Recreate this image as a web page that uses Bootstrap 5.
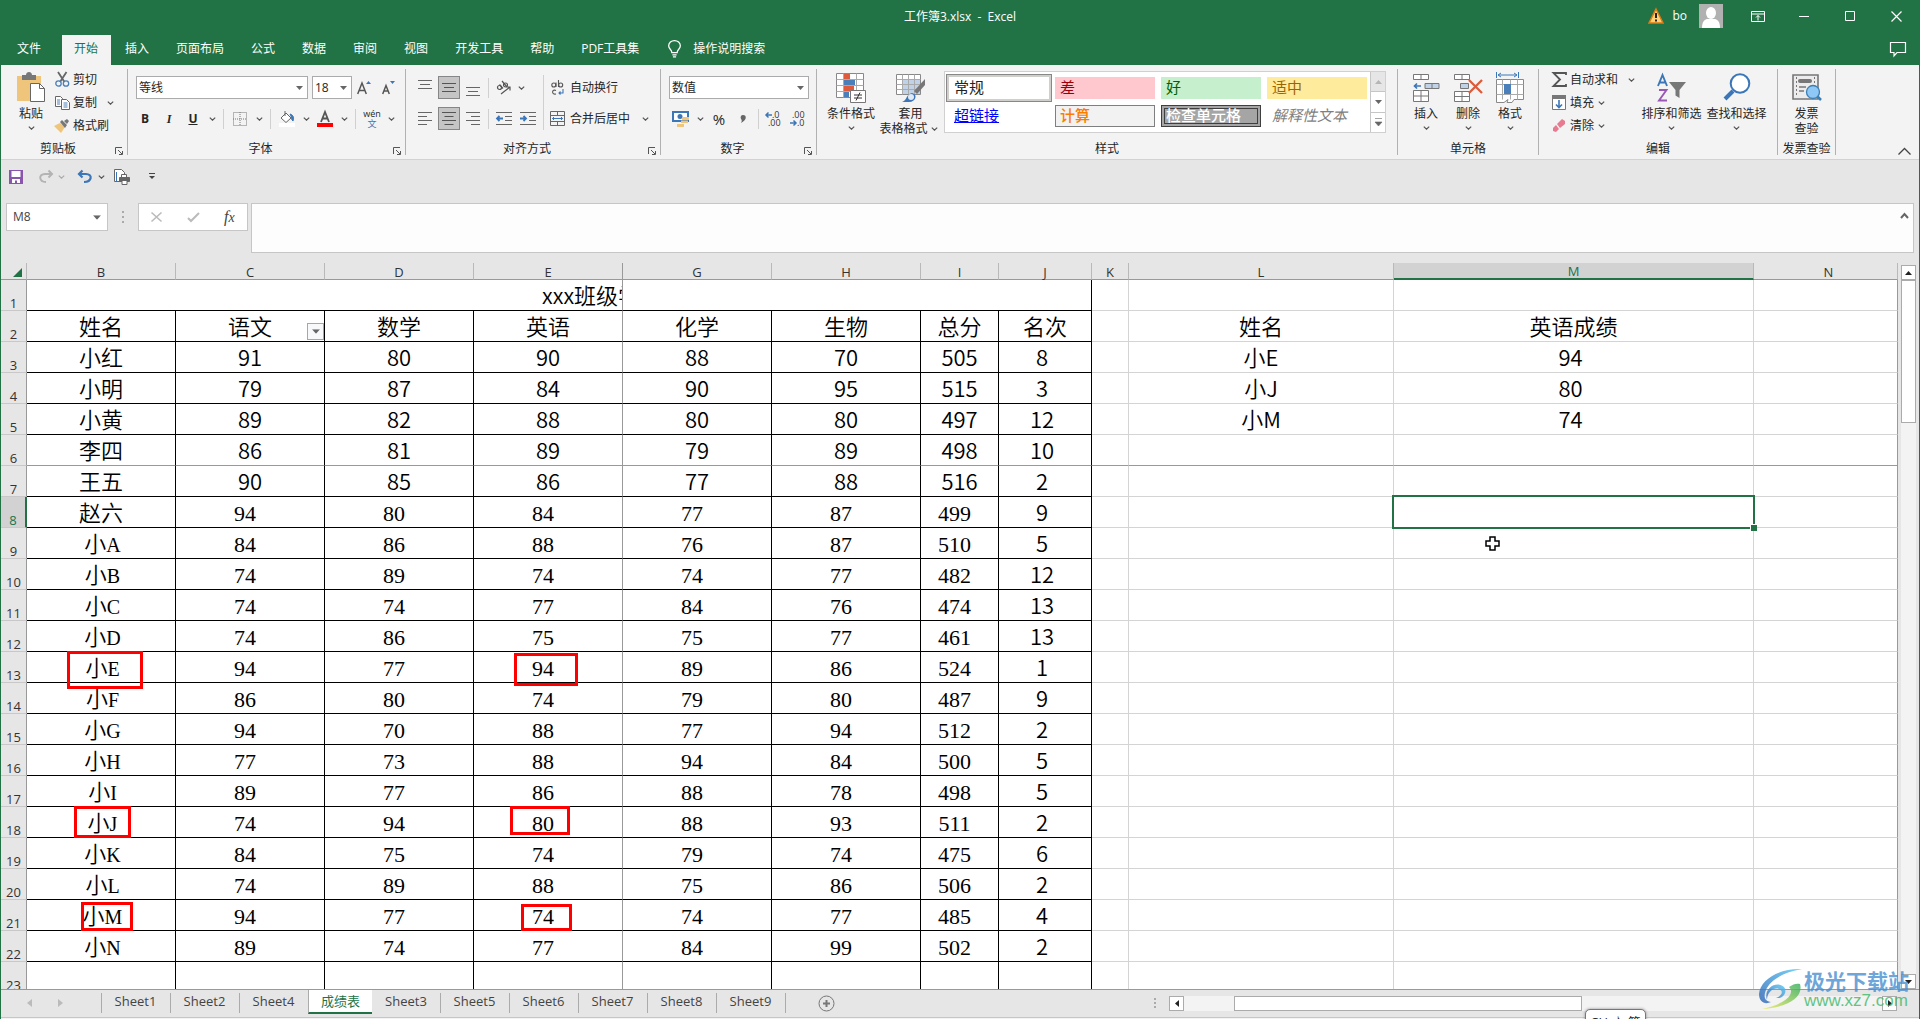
<!DOCTYPE html>
<html lang="zh-CN">
<head>
<meta charset="utf-8">
<meta name="viewport" content="width=device-width, initial-scale=1">
<title>工作簿3.xlsx - Excel</title>
<link href="https://cdn.jsdelivr.net/npm/bootstrap@5.3.0/dist/css/bootstrap.min.css" rel="stylesheet">
<script src="https://cdn.jsdelivr.net/npm/bootstrap@5.3.0/dist/js/bootstrap.bundle.min.js"></script>
<style>
:root{--xl:#217346;--ui:#f3f3f3;--chrome:#e6e6e6}
body{font:12px/16px "Open Sans","Noto Sans CJK SC",sans-serif;color:#262626;background:var(--chrome);overflow:hidden}
button,input,select{font:inherit;color:inherit;background:none;border:0;padding:0;margin:0;border-radius:0}
svg{display:block;flex:none;overflow:visible}
.app{border:solid var(--xl);border-width:0 1px;position:relative}
.titlebar{background:var(--xl);color:#fff;height:35px;display:grid;grid-template-columns:1fr auto 1fr}
.titlebar .doc{line-height:34px;white-space:pre}
.titlebar .tools{height:32px}
.winbtn{width:46px;height:32px;display:flex;align-items:center;justify-content:center}
.tabstrip{background:var(--xl);height:30px;color:#fff}
.tabstrip button{padding:0 13px 2px 14px;height:30px;white-space:nowrap}
.tabstrip .file-tab{padding:0 21px 2px 16px}
.tabstrip .on{background:var(--ui);color:var(--xl);padding:0 13px 2px 12px}
.ribbon{background:var(--ui);height:95px;padding-top:4px;border-bottom:1px solid #d2d2d2}
.grp{height:88px;display:flex;flex-direction:column;flex:none}
.grp-main{height:72px;display:flex;align-items:flex-start}
.grp-name{display:flex;height:16px;line-height:16px;text-align:center}
.rule{width:1px;height:86px;background:#b1b1b1;flex:none}
.g-clip{width:126px}.g-font{width:277px}.g-align{width:254px}.g-num{width:155px}.g-style{width:580px}.g-cells{width:140px}.g-edit{width:238px}.g-inv{width:57px}
.launch{width:12px;height:14px;padding-top:5px}
.line3{height:23px;display:flex;align-items:center;gap:2px;white-space:nowrap;padding-bottom:2px}
.ico{width:18px;display:flex;justify-content:center;flex:none}
.big{display:flex;flex-direction:column;align-items:center;padding-top:3px;line-height:15px;white-space:nowrap}
.big .pic{height:31px;margin-bottom:3px;display:flex;align-items:center;justify-content:center}
.big .drop{height:13px;display:flex;align-items:center}
.two{display:flex;flex-direction:column;gap:8px;padding-top:7px}
.trow{height:23px;display:flex;align-items:center}
.sq{width:24px;height:23px;display:flex;align-items:center;justify-content:center}
.sq.pressed{width:22px;margin:0 1px;background:#c5c5c5;border:1px solid #868686}
.dd{width:14px;height:23px;display:flex;align-items:center;justify-content:center}
.dd.slim{width:10px}
.bar{width:1px;height:20px;background:#d0d0d0;margin:0 4px}
.bar.near{margin:0 3px}
.bar.tall{height:55px;margin:6px 6px 0 3px}
.combo{height:23px;border:1px solid #ababab;background:#fff;display:flex;align-items:center;padding:0 4px 0 2px}
.combo select,.combo input{appearance:none;flex:1;min-width:0;outline:0}
.glyph{font-size:15px;font-weight:700;color:#555}
.gallery{width:442px;height:62px;margin-top:2px;background:#fff;border:1px solid #d0d0d0;display:flex}
.swatches{display:grid;grid-template-columns:repeat(4,100px);grid-auto-rows:22px;gap:6px;padding:5px 3px 0 4px;width:425px}
.swatches button{font-size:15px;line-height:18px;text-align:left;padding:0 0 2px 5px;white-space:nowrap}
.s-normal{box-shadow:0 0 0 2px #d0cfcb,0 0 0 3px #888;color:#222}
.s-bad{background:#ffc7ce;color:#9c0006}.s-good{background:#c6efce;color:#006100}.s-mid{background:#ffeb9c;color:#9c6500}
.s-link{color:#00f;text-decoration:underline}
.swatches .s-calc{background:#f2f2f2;color:#fa7d00;font-weight:500;border:1px solid #7f7f7f;padding-left:4px}
.swatches .s-check{background:#a5a5a5;color:#fff;font-weight:500;border:4px double #3f3f3f;padding-left:1px;line-height:12px}
.s-note{color:#7f7f7f;font-style:italic}
.gal-scroll{width:15px;display:flex;flex-direction:column}
.gal-scroll button{flex:1;border-left:1px solid #c6c6c6;border-bottom:1px solid #c6c6c6;display:flex;align-items:center;justify-content:center}
.gal-scroll button:first-child{background:var(--chrome)}
.gal-scroll button:last-child{border-bottom:0}
.qat{height:43px;padding:0 0 10px 7px;display:flex;align-items:center}
.fbar{display:flex;padding:0 5px;height:50px;align-items:flex-start}
.namebox{width:102px;height:28px;border:1px solid #c6c6c6;background:#fff;display:flex;align-items:center;padding:0 6px}
.namebox input{width:80px;flex:1;min-width:0;color:#444;outline:0}
.fxbox{width:110px;height:28px;border:1px solid #c6c6c6;background:#fff;display:flex;align-items:center;justify-content:space-around}
.fx-btn{font:italic 16px "Liberation Serif",serif;color:#444}
.finput{height:50px;border:1px solid #c6c6c6;background:#fdfdfd;margin-left:3px;display:flex;flex:1}
.finput textarea{flex:1;border:0;background:none;resize:none;outline:0}
.grid-area{display:flex;flex:1 1 0;min-height:0;margin-top:10px;overflow:hidden}
.sheet-view{flex:1;min-width:0;overflow:hidden}
.cells{table-layout:fixed;width:100%;border-collapse:separate;border-spacing:0;background:#fff;color:#000}
.cells th{background:var(--chrome);font-weight:400;text-align:center;font-size:13px;color:#333;padding:0}
.cells thead th{height:17px;line-height:14px;padding-top:2px;border-right:1px solid #b9b9b9;border-bottom:1px solid #999}
.cells thead .split{border-right-color:#999}
.cells thead .cur{background:#d2d2d2;color:var(--xl);border-bottom:2px solid var(--xl);line-height:13px}
.cells thead .last-col{padding-left:6px}
.cells tbody th{height:31px;line-height:13px;vertical-align:bottom;border-right:1px solid #999;border-bottom:1px solid #c8c8c8}
.cells tbody .cur th{background:#d2d2d2;color:var(--xl);border-right:2px solid var(--xl)}
.cells td{height:31px;padding:0 0 2px;line-height:28px;font-size:22px;font-family:"Noto Sans CJK SC",sans-serif;font-weight:350;text-align:center;white-space:nowrap;border:solid #d4d4d4;border-width:0 1px 1px 0;position:relative}
.cells td.ink{border-color:#000}
.cells td.split{border-right-color:#999}
.cells .freeze td{border-bottom-color:#999}
.cells td.edge{border-right-color:#999}
.cells td.song{font-family:"Liberation Serif",serif;font-weight:400;line-height:27px;padding:3px 10px 0 0}
.cells td.pupil{padding-left:3px}
.pupil i{font:normal 400 20px/20px "Liberation Serif",serif}
.cells td.off-s{padding-right:6px}
.cells td.heading{text-align:left;padding-left:515px;overflow:hidden;border-right-color:#999}
.filter{position:absolute;right:0;bottom:1px;width:17px;height:17px;border:1px solid #a0a8b4;background:#f8f9fb;display:flex;align-items:center;justify-content:center}
.box-mark{position:absolute;border:3px solid #f00;z-index:2}
.bm1{left:40px;top:-1px;width:76px;height:38px}
.bm2{left:40px;top:1px;width:64px;height:33px}
.bm3{left:47px;top:-1px;width:57px;height:32px}
.bm4{left:36px;top:-1px;width:60px;height:29px}
.bm5{left:54px;top:2px;width:52px;height:29px}
.bm6{left:47px;top:4px;width:51px;height:27px}
.picked{position:absolute;inset:-2px;border:2px solid var(--xl);z-index:2}
.picked::after{content:"";position:absolute;right:-4px;bottom:-4px;width:7px;height:7px;background:var(--xl);border:solid #fff;border-width:1px 0 0 1px}
.pointer{position:absolute;left:91px;top:8px;z-index:3}
.vscroll{width:15px;margin:2px 3px 0 3px;background:var(--ui);display:flex;flex-direction:column}
.sbtn{width:15px;height:15px;border:1px solid #ababab;background:#fff;display:flex;align-items:center;justify-content:center;flex:none}
.vthumb{height:143px;border:1px solid #ababab;background:#fff}
.sheetbar{height:28px;border-top:1px solid #999;display:flex;flex:none;color:#444}
.sheetbar .nav-btns{width:100px;padding:0 38px 2px 26px;display:flex;align-items:center;justify-content:space-between}
.stab{width:69px;height:20px;margin-top:3px;border-left:1px solid #ababab;font-size:13px;line-height:14px;padding:0 1px 4px 0}
.stab.last{border-right:1px solid #ababab;width:70px}
.stab.act{height:24px;width:64px;margin-top:0;background:#fff;color:var(--xl);border-bottom:2px solid var(--xl);padding:0}
.stab.act + .stab{border-left-color:transparent;width:68px}
.hscroll{width:728px;height:15px;margin:6px 22px 0 13px;background:var(--ui);display:flex}
.hthumb{width:348px;margin-left:50px;margin-right:auto;border:1px solid #ababab;background:#fff}
.statusbar{height:2px;border-top:1px solid #c6c6c6;background:var(--ui);flex:none}
.ime{position:absolute;left:1584px;bottom:-14px;width:61px;height:24px;border:1px solid #777;border-radius:5px;background:#fff;box-shadow:0 0 3px #888;text-align:center;line-height:25px;font-size:13px;z-index:4;white-space:nowrap}
.wm{position:absolute;right:10px;bottom:9px;display:flex;gap:2px;z-index:5;opacity:.8;font-family:"Noto Sans CJK SC",sans-serif}
.wm strong{display:block;font-size:21px;line-height:24px;color:#4a90d0;font-weight:700}
.wm span{display:block;font:400 17px/18px "Liberation Sans",sans-serif;color:#3fb868}
</style>
</head>
<body>
<svg width="0" height="0" class="position-absolute">
<symbol id="chev" viewBox="0 0 7 4"><path d="M.8.6 3.5 3.2 6.2.6" fill="none" stroke="#555" stroke-width="1.2"/></symbol>
<symbol id="tri" viewBox="0 0 7 4"><path d="M0 0h7L3.500 4z" fill="#666"/></symbol>
<symbol id="launch" viewBox="0 0 8 8"><path d="M.5 7V.5H7M3 3l4 4M7.500 4v3.500H4" fill="none" stroke="#555"/></symbol>
</svg>
<div class="app d-flex flex-column vh-100">
<header>
<div class="titlebar">
<span></span><span class="doc">工作簿3.xlsx  -  Excel</span>
<div class="tools d-flex align-items-center justify-content-end">
<svg width="16" height="16" viewBox="0 0 16 16"><path d="M8 1 15 15H1z" fill="#ffd27a" stroke="#e07a10" stroke-width="1.500"/><path d="M8 5v5M8 11.500v2" stroke="#222" stroke-width="2"/></svg>
<span class="px-2 me-1">bo</span>
<svg class="me-1" width="24" height="24" viewBox="0 0 24 24"><path fill="#b1b1b1" d="M0 0h24v24H0z"/><ellipse cx="12" cy="9" rx="5" ry="6" fill="#fff"/><path d="M3 24c0-7 3-9 6-9h6c3 0 6 2 6 9z" fill="#fff"/></svg>
<button class="winbtn ms-2" aria-label="功能区显示选项"><svg width="14" height="11" fill="none" stroke="#fff"><path d="M.5.5h13v10H.5zM.5 3h13M7 9.500v-5M5 6.500l2-2 2 2"/></svg></button>
<button class="winbtn" aria-label="最小化"><svg width="10" height="10" stroke="#fff"><path d="M0 5.500h10"/></svg></button>
<button class="winbtn" aria-label="最大化"><svg width="10" height="10" fill="none" stroke="#fff"><path d="M.5.5h9v9h-9z"/></svg></button>
<button class="winbtn" aria-label="关闭"><svg width="11" height="11" stroke="#fff" stroke-width="1.200"><path d="m.5.5 10 10m0-10-10 10"/></svg></button>
</div>
</div>
<nav class="tabstrip d-flex align-items-center">
<button class="file-tab">文件</button><button class="on">开始</button><button>插入</button><button>页面布局</button><button>公式</button><button>数据</button><button>审阅</button><button>视图</button><button>开发工具</button><button>帮助</button><button>PDF工具集</button>
<button class="d-flex align-items-center ps-3"><svg class="me-2" width="13" height="18" viewBox="0 0 12 17" fill="none" stroke="#fff" stroke-width="1.200"><path d="M3.500 12c0-3-3-3.500-3-6.500a5.500 5 0 0 1 11 0c0 3-3 3.500-3 6.500zM4 14h4M4.500 16h3"/></svg><span class="ms-1">操作说明搜索</span></button>
<button class="ms-auto" aria-label="批注"><svg width="16" height="15" fill="none" stroke="#fff" stroke-width="1.200"><path d="M.5.5h15v10H7l-3 3.500v-3.500H.5z"/></svg></button>
</nav>
<div class="ribbon d-flex">
<section class="grp g-clip">
<div class="grp-main ps-2">
<button class="big" style="width:44px"><span class="pic"><svg width="30" height="31" viewBox="0 0 30 31"><path fill="#efc57c" d="M1 4h24v25H1z"/><path fill="#777" d="M6 3h4c0-4 6-4 6 0h4v5H6z"/><path d="M14.500 11.500h9l5 5v13h-14z" fill="#fff" stroke="#666"/><path d="M23.500 11.500v5h5" fill="none" stroke="#666"/></svg></span>粘贴<span class="drop"><svg width="7" height="4"><use href="#chev"/></svg></span></button>
<div>
<button class="line3"><span class="ico"><svg width="15" height="15" viewBox="0 0 15 15" fill="none"><path d="M3 0l6.500 10M11.500 0 5 10" stroke="#666" stroke-width="1.800"/><circle cx="3.500" cy="11.500" r="2.700" stroke="#4a7fba" stroke-width="1.300"/><circle cx="11" cy="11.500" r="2.700" stroke="#4a7fba" stroke-width="1.300"/></svg></span>剪切</button>
<button class="line3"><span class="ico"><svg width="15" height="14" viewBox="0 0 15 14" fill="#fff" stroke="#666"><path d="M.5.5h5l2 2v8h-7z"/><path d="M6.500 3.500h5l3 3v7h-8z"/><path d="M2 4h3M2 6h3M2 8h3M8.500 7h4M8.500 9h4M8.500 11h4" stroke="#4a7fba"/></svg></span>复制<span class="dd"><svg class="ms-2" width="7" height="4"><use href="#chev"/></svg></span></button>
<button class="line3"><span class="ico"><svg width="16" height="14" viewBox="0 0 16 14"><path d="M0 7l6-3 5 4-4 6z" fill="#efc57c"/><path d="m6 3 2-2 5 5-2 3zM10 2l3-2 2 2-2 3z" fill="#777"/></svg></span>格式刷</button>
</div></div>
<div class="grp-name"><span class="flex-fill">剪贴板</span><button class="launch" aria-label="剪贴板设置"><svg width="8" height="8"><use href="#launch"/></svg></button></div>
</section><div class="rule"></div>

<section class="grp g-font">
<div class="grp-main"><div class="two ps-2">
<div class="trow"><div class="combo" style="width:172px"><select aria-label="字体"><option>等线</option></select><svg width="7" height="4"><use href="#tri"/></svg></div><div class="combo ms-1" style="width:40px"><select aria-label="字号"><option>18</option></select><svg width="7" height="4"><use href="#tri"/></svg></div>
<button class="sq glyph fw-normal" aria-label="增大字号"><svg width="14" height="15" viewBox="0 0 14 15" fill="none"><path d="M.7 14 5 3l4.300 11M2.200 10.500h5.600" stroke="#555" stroke-width="1.500"/><path d="M9 4l2.500-3L14 4z" fill="#3b76b8"/></svg></button>
<button class="sq" aria-label="减小字号"><svg width="13" height="15" viewBox="0 0 13 15" fill="none"><path d="M.7 14 4 5.500 7.300 14M2 11h4" stroke="#555" stroke-width="1.500"/><path d="M8 1h5l-2.500 3z" fill="#3b76b8"/></svg></button></div>
<div class="trow" style="margin-left:-3px"><button class="sq fw-bold">B</button><button class="sq fst-italic fw-bold" style="font-family:'Liberation Serif',serif">I</button><button class="sq fw-bold text-decoration-underline">U</button><button class="dd" aria-label="下划线选项"><svg width="7" height="4"><use href="#chev"/></svg></button><i class="bar"></i>
<button class="sq" aria-label="边框"><svg width="14" height="14" fill="none" stroke="#777" stroke-dasharray="1 1"><path d="M.5.5h13v13H.5zM7 0v14M0 7h14"/></svg></button><button class="dd" aria-label="边框选项"><svg width="7" height="4"><use href="#chev"/></svg></button><i class="bar"></i>
<button class="sq" aria-label="填充颜色"><svg width="16" height="16" viewBox="0 0 16 16"><path d="M2 7l5-5 5 5-5 4.500z" fill="#fff" stroke="#666"/><path d="M6 5V0" stroke="#666"/><path d="M11 3c4 1 4 5 3 7-2-1-1-4-3-7z" fill="#3b76b8" stroke="#3b76b8"/><path d="M0 12h16v4H0z" fill="#fff"/></svg></button><button class="dd" aria-label="填充颜色选项"><svg width="7" height="4"><use href="#chev"/></svg></button>
<button class="sq" aria-label="字体颜色"><svg width="16" height="16" viewBox="0 0 16 16"><path d="M4 11 8 1l4 10M5.300 7.500h5.400" fill="none" stroke="#555" stroke-width="1.800"/><path d="M0 12h16v4H0z" fill="red"/></svg></button><button class="dd" aria-label="字体颜色选项"><svg width="7" height="4"><use href="#chev"/></svg></button><i class="bar"></i>
<button class="sq flex-column" style="font-size:9px;line-height:10px"><span>wén</span><span style="color:#3b76b8">文</span></button><button class="dd" aria-label="拼音选项"><svg width="7" height="4"><use href="#chev"/></svg></button></div>
</div></div>
<div class="grp-name"><span class="flex-fill">字体</span><button class="launch" aria-label="字体设置"><svg width="8" height="8"><use href="#launch"/></svg></button></div>
</section><div class="rule"></div>

<section class="grp g-align">
<div class="grp-main" style="padding-left:7px"><div class="two">
<div class="trow"><button class="sq" aria-label="顶端对齐"><svg width="14" height="16" stroke="#666"><path d="M0 .5h14M2 4.500h10M0 8.500h14"/></svg></button><button class="sq pressed" aria-label="垂直居中"><svg width="14" height="10" stroke="#555"><path d="M0 .5h14M2 4.500h10M0 8.500h14"/></svg></button><button class="sq" aria-label="底端对齐"><svg width="14" height="16" stroke="#666"><path d="M0 7.500h14M2 11.500h10M0 15.500h14"/></svg></button><i class="bar near"></i>
<button class="sq" aria-label="方向"><svg width="16" height="16" viewBox="0 0 16 16" fill="none" stroke="#555" stroke-width="1.200"><circle cx="3.500" cy="7.500" r="2"/><path d="M3.500 4.500 7 8.500M6 1l5 6"/><circle cx="9.500" cy="5" r="2"/><path d="M5 14l9-7M10.500 7H14v3.500"/></svg></button><button class="dd slim" aria-label="方向选项"><svg width="7" height="4"><use href="#chev"/></svg></button></div>
<div class="trow"><button class="sq" aria-label="左对齐"><svg width="14" height="13" stroke="#666"><path d="M0 .5h14M0 4.500h9M0 8.500h14M0 12.500h9"/></svg></button><button class="sq pressed" aria-label="居中"><svg width="14" height="13" stroke="#555"><path d="M0 .5h14M2.500 4.500h9M0 8.500h14M2.500 12.500h9"/></svg></button><button class="sq" aria-label="右对齐"><svg width="14" height="13" stroke="#666"><path d="M0 .5h14M5 4.500h9M0 8.500h14M5 12.500h9"/></svg></button><i class="bar near"></i>
<button class="sq" aria-label="减少缩进"><svg width="16" height="13" stroke="#666"><path d="M0 .5h16M9 4.500h7M9 8.500h7M0 12.500h16"/><path d="M1 6.500h6M3.500 4 1 6.500 3.500 9" fill="none" stroke="#3b76b8" stroke-width="1.800"/></svg></button><button class="sq" aria-label="增加缩进"><svg width="16" height="13" stroke="#666"><path d="M0 .5h16M9 4.500h7M9 8.500h7M0 12.500h16"/><path d="M0 6.500h6M3.500 4 6 6.500 3.500 9" fill="none" stroke="#3b76b8" stroke-width="1.800"/></svg></button></div>
</div><i class="bar tall"></i>
<div class="two" style="margin-left:-2px"><button class="trow"><span class="ico me-1"><svg width="13" height="16" viewBox="0 0 13 16" fill="none" stroke="#555" stroke-width="1.100"><circle cx="2.800" cy="5" r="2"/><path d="M5 2.500V7M7.500 0v7"/><circle cx="9.700" cy="5" r="2"/><path d="M5 10.500c-4-2-5 4.500 0 3.500"/><path d="M12 9v4H8M9.500 11.500 8 13l1.500 1.500" stroke="#3b76b8"/></svg></span>自动换行</button>
<button class="trow"><span class="ico me-1"><svg width="15" height="15" fill="none" stroke="#666"><path d="M.5.5h14v14H.5zM.5 4.500h14M.5 10.500h14M7.500 0v4M7.500 11v4"/><path d="M2.500 7.500h10M4 6 2.500 7.500 4 9M11 6l1.500 1.500L11 9" stroke="#3b76b8"/></svg></span>合并后居中<span class="dd ms-2"><svg width="7" height="4"><use href="#chev"/></svg></span></button></div>
</div>
<div class="grp-name"><span class="flex-fill">对齐方式</span><button class="launch" aria-label="对齐设置"><svg width="8" height="8"><use href="#launch"/></svg></button></div>
</section><div class="rule"></div>

<section class="grp g-num">
<div class="grp-main ps-2"><div class="two">
<div class="trow"><div class="combo" style="width:140px"><select aria-label="数字格式"><option>数值</option></select><svg width="7" height="4"><use href="#tri"/></svg></div></div>
<div class="trow"><button class="sq" aria-label="会计格式"><svg width="18" height="16" viewBox="0 0 18 16"><path d="M1 1h15v9H1z" fill="#fff" stroke="#3b76b8" stroke-width="2"/><circle cx="8" cy="5.500" r="2.500" fill="#3b76b8"/><path d="M10 6h7v3h-7zM9 9.500h7v2.500H9zM5 13h7v3H5z" fill="#efc57c"/></svg></button><button class="dd" aria-label="会计格式选项"><svg width="7" height="4"><use href="#chev"/></svg></button><button class="sq" style="font-size:15px">%</button><button class="sq" aria-label="千位分隔"><svg width="6" height="8"><path d="M3 0c4 0 4 5-2 8 1-2 1-3 0-4C0 2 1 0 3 0z" fill="#666"/></svg></button><i class="bar near"></i>
<button class="sq" aria-label="增加小数位数"><svg width="16" height="16" font-size="9" fill="#333"><text x="6" y="7">.0</text><text x="2" y="15">.00</text><path d="M0 4h6M2.500 1.500 0 4l2.500 2.500" stroke="#3b76b8" fill="none" stroke-width="1.500"/></svg></button>
<button class="sq" aria-label="减少小数位数"><svg width="16" height="16" font-size="9" fill="#333"><text x="2" y="7">.00</text><text x="7" y="15">.0</text><path d="M0 12h6M3.500 9.500 6 12l-2.500 2.500" stroke="#3b76b8" fill="none" stroke-width="1.500"/></svg></button></div>
</div></div>
<div class="grp-name"><span class="flex-fill">数字</span><button class="launch" aria-label="数字设置"><svg width="8" height="8"><use href="#launch"/></svg></button></div>
</section><div class="rule"></div>

<section class="grp g-style">
<div class="grp-main ps-2">
<button class="big" style="width:52px"><span class="pic"><svg width="30" height="30" viewBox="0 0 30 30"><path d="M.5.5h27v24H.5z" fill="#fff" stroke="#888"/><path d="M8 1h6v5H8zM8 13h10v5H8z" fill="#dd5b3b"/><path d="M8 7h11v5H8zM8 19h5v5H8z" fill="#4a7fba"/><path d="M.5 6.500h27M.5 12.500h27M.5 18.500h27M7.500.5v24M20.500.5v24" stroke="#aaa" fill="none"/><path d="M14.500 17.500h15v12h-15z" fill="#fff" stroke="#777"/><path d="M18 22h8M18 25h8M24 19.500l-4 8" stroke="#333"/></svg></span>条件格式<span class="drop"><svg width="7" height="4"><use href="#chev"/></svg></span></button>
<button class="big" style="width:67px"><span class="pic"><svg width="30" height="28" viewBox="0 0 30 28"><path d="M.5.5h24v20H.5z" fill="#fff" stroke="#888"/><path d="M7 6h17v14H7z" fill="#bfd2e8"/><path d="M.5 5.500h24M.5 10.500h24M.5 15.500h24M6.500.5v20M12.500.5v20M18.500.5v20" stroke="#aaa"/><path d="M29 5v6l-8 9-3-3z" fill="#777"/><path d="M6 28c5-1 4-8 10-9 6 1 4 9-3 9z" fill="#3b76b8"/><circle cx="15" cy="23" r="3" fill="#dfeaf6"/></svg></span>套用<span class="d-flex align-items-center">表格格式<span class="dd" style="height:15px"><svg width="7" height="4"><use href="#chev"/></svg></span></span></button>
<div class="gallery"><div class="swatches"><button class="s-normal">常规</button><button class="s-bad">差</button><button class="s-good">好</button><button class="s-mid">适中</button><button class="s-link">超链接</button><button class="s-calc">计算</button><button class="s-check">检查单元格</button><button class="s-note">解释性文本</button></div>
<div class="gal-scroll"><button aria-label="上一行"><svg width="7" height="4"><path d="M0 4h7L3.500 0z" fill="#b5b5b5"/></svg></button><button aria-label="下一行"><svg width="7" height="4"><use href="#tri"/></svg></button><button aria-label="其他"><svg width="7" height="8"><path d="M0 .5h7M0 4h7L3.500 8z" stroke="#666" stroke-width=".6" fill="#666"/></svg></button></div></div>
</div>
<div class="grp-name"><span class="flex-fill">样式</span></div>
</section><div class="rule"></div>

<section class="grp g-cells">
<div class="grp-main" style="padding-left:7px">
<button class="big" style="width:42px"><span class="pic"><svg width="27" height="28" viewBox="0 0 27 28" fill="#fff" stroke="#777"><path d="M.5.5h15v5H.5zM8 .5v5M.5 16.500h15v11H.5zM8 16.500v11M.5 22h15"/><path d="M12 9.500h14v5H12zM19 9.500v5" fill="#bfd2e8"/><path d="M1 12h7M4 9.500 1.500 12 4 14.500" stroke="#3b76b8" stroke-width="1.700" fill="none"/></svg></span>插入<span class="drop"><svg width="7" height="4"><use href="#chev"/></svg></span></button>
<button class="big" style="width:42px"><span class="pic"><svg width="29" height="28" viewBox="0 0 29 28" fill="#fff" stroke="#777"><path d="M.5.5h15v5H.5zM8 .5v5M.5 17.500h15v10H.5zM8 17.500v10M.5 22.500h15"/><path d="M6.500 9.500h8v5h-8z" fill="#bfd2e8"/><path d="m15 6 13 13M28 6 15 19" stroke="#dd5b3b" stroke-width="2.300"/></svg></span>删除<span class="drop"><svg width="7" height="4"><use href="#chev"/></svg></span></button>
<button class="big" style="width:42px"><span class="pic"><svg width="28" height="31" viewBox="0 0 28 31" fill="none"><path d="M.5 0v6M22.500 0v6M2 3h19M5 1 2 3l3 2M18 1l3 2-3 2" stroke="#3b76b8"/><path d="M.5 7.500h27v20H18l-2 3h-5l1-3-4 3H.5z" fill="#fff" stroke="#888"/><path d="M.5 12.500h27M.5 22.500h27M6.500 7.500v20M14.500 7.500v20M21.500 7.500v20" stroke="#aaa"/><path fill="#4a7fba" d="M8 12h7v10H8z"/></svg></span>格式<span class="drop"><svg width="7" height="4"><use href="#chev"/></svg></span></button>
</div>
<div class="grp-name"><span class="flex-fill">单元格</span></div>
</section><div class="rule"></div>

<section class="grp g-edit">
<div class="grp-main" style="padding-left:7px"><div style="width:93px">
<button class="line3"><span class="ico ms-1"><svg width="15" height="15" fill="none" stroke="#555" stroke-width="1.800"><path d="M14 3V1H1.500L8 7.500 1.500 14H14v-2"/></svg></span>自动求和<span class="dd ms-1"><svg width="7" height="4"><use href="#chev"/></svg></span></button>
<button class="line3"><span class="ico ms-1"><svg width="14" height="15" viewBox="0 0 14 15"><path d="M.5.5h13v14H.5z" fill="#fff" stroke="#777"/><path d="M0 0h14v4H0z" fill="#777"/><path d="M7 5v7M4 9.500 7 12.500l3-3" stroke="#3b76b8" stroke-width="1.600" fill="none"/></svg></span>填充<span class="dd slim"><svg width="7" height="4"><use href="#chev"/></svg></span></button>
<button class="line3"><span class="ico ms-1"><svg width="14" height="13" viewBox="0 0 14 13"><path d="M5 5 10 0l3 2v3L8 9z" fill="#e8798f"/><path d="m4 6 3 4-3 3-3-1V9z" fill="#e8798f"/></svg></span>清除<span class="dd slim"><svg width="7" height="4"><use href="#chev"/></svg></span></button>
</div>
<button class="big" style="width:65px"><span class="pic"><svg width="30" height="28" viewBox="0 0 30 28" fill="none"><path d="M1 12 5.500 1 10 12M2.500 8.500h6" stroke="#3b76b8" stroke-width="1.900"/><path d="M2 16h7.500L2 26.500h8" stroke="#9a57b5" stroke-width="1.900"/><path d="M12 8h17l-6.500 8v8l-4-2.500V16z" fill="#777"/></svg></span>排序和筛选<span class="drop"><svg width="7" height="4"><use href="#chev"/></svg></span></button>
<button class="big" style="width:65px"><span class="pic"><svg width="28" height="29" viewBox="0 0 28 29" fill="none" stroke="#3b76b8"><path d="m10 18-8 8" stroke-width="4"/><circle cx="17" cy="10.500" r="9.300" stroke-width="2" fill="#fff"/></svg></span>查找和选择<span class="drop"><svg width="7" height="4"><use href="#chev"/></svg></span></button>
</div>
<div class="grp-name"><span class="flex-fill">编辑</span></div>
</section><div class="rule"></div>

<section class="grp g-inv">
<div class="grp-main justify-content-center"><button class="big"><span class="pic"><svg width="30" height="27" viewBox="0 0 30 27"><path d="M1 1h25v24H1z" fill="#ececec" stroke="#777" stroke-width="1.600"/><path d="M4.500 3v20M22.500 3v9" stroke="#777" stroke-dasharray="2 2"/><path d="M8 7h10" stroke="#777" stroke-width="4" stroke-linecap="round"/><path d="M7 13h7M7 17h5" stroke="#777" stroke-width="1.600"/><path d="m25 22 4 4" stroke="#3b7fb5" stroke-width="2.500"/><circle cx="21" cy="18" r="6.500" fill="#8fc8f5" stroke="#3b7fb5" stroke-width="1.300"/></svg></span>发票<span>查验</span></button></div>
<div class="grp-name"><span class="flex-fill text-nowrap">发票查验</span></div>
</section><div class="rule"></div>
<button class="ms-auto align-self-end me-2 pb-1" aria-label="折叠功能区"><svg width="13" height="7" fill="none" stroke="#444" stroke-width="1.300"><path d="m.5 6.500 6-6 6 6"/></svg></button>
</div>
</header>

<div class="qat">
<button class="sq" style="width:16px" aria-label="保存"><svg width="14" height="14"><path d="M0 0h14v14H0z" fill="#8a55ad"/><path d="M2.500 1h9v6h-9zM3 9h8v4H3z" fill="#fff"/><path d="M6 10.500h2V13H6z" fill="#8a55ad"/></svg></button>
<button class="sq" style="width:16px;margin-left:14px" aria-label="恢复"><svg width="15" height="13" fill="none" stroke="#b3b3b3" stroke-width="2"><path d="M7 12C0 12-1 4 6 4h7M9.500.5 13 4 9.500 7.500"/></svg></button><button class="dd" aria-label="恢复选项"><svg width="7" height="4" opacity=".4"><use href="#chev"/></svg></button>
<button class="sq ms-1" aria-label="撤销"><svg width="15" height="13" fill="none" stroke="#3b76b8" stroke-width="2.200"><path d="M7 12c8 0 9-8 2-8H2M5.500.5 2 4l3.500 3.500"/></svg></button><button class="dd slim" aria-label="撤销选项"><svg width="7" height="4"><use href="#chev"/></svg></button>
<button class="sq ms-1" aria-label="打印预览"><svg width="17" height="16" viewBox="0 0 17 16" fill="#fff" stroke="#666"><path d="M.5.5h7l3 3v9H.5z"/><path d="M2.500 12V3" stroke="#3b76b8"/><path d="M7.500 5.500h5v4h-5z"/><path fill="#666" d="M5.500 8.500h10v4h-10z"/><path d="M8 11.500h5v4H8z"/></svg></button>
<button class="sq ms-2 ps-1" style="width:16px" aria-label="自定义"><svg width="6" height="7"><path d="M0 .5h6" stroke="#444"/><path d="M0 3h6L3 6z" fill="#444"/></svg></button>
</div>
<div class="fbar">
<div class="namebox"><input aria-label="名称框" value="M8"><svg width="8" height="5" viewBox="0 0 7 4"><use href="#tri"/></svg></div>
<svg class="mt-2 align-self-start" style="margin:0 14px" width="2" height="12" fill="#aaa"><path d="M0 0h2v2H0zM0 5h2v2H0zM0 10h2v2H0z"/></svg>
<div class="fxbox"><button aria-label="取消"><svg width="11" height="10" stroke="#bbb" stroke-width="1.600"><path d="m.5.5 10 9m0-9-10 9"/></svg></button><button aria-label="输入"><svg width="13" height="10" fill="none" stroke="#bbb" stroke-width="2"><path d="m1 6 3 3 8-8"/></svg></button><button class="fx-btn">f<small>x</small></button></div>
<div class="finput"><textarea aria-label="编辑栏"></textarea><svg class="mt-2 me-1" width="9" height="6" fill="none" stroke="#666" stroke-width="2"><path d="m1 6 3.500-4L8 6"/></svg></div>
</div>

<main class="grid-area">
<div class="sheet-view"><table class="cells">
<colgroup><col style="width:26px"><col style="width:149px"><col style="width:149px"><col style="width:149px"><col style="width:149px"><col style="width:149px"><col style="width:149px"><col style="width:78px"><col style="width:93px"><col style="width:37px"><col style="width:265px"><col style="width:360px"><col></colgroup>
<thead><tr><th><svg class="ms-auto me-1" width="9" height="9"><path d="M9 0v9H0z" fill="#217346"/></svg></th><th>B</th><th>C</th><th>D</th><th class="split">E</th><th>G</th><th>H</th><th>I</th><th>J</th><th>K</th><th>L</th><th class="cur">M</th><th class="last-col">N</th></tr></thead>
<tbody id="rows"></tbody>
</table></div>
<div class="vscroll"><button class="sbtn" aria-label="向上滚动"><svg width="7" height="4"><path d="M0 4h7L3.500 0z" fill="#222"/></svg></button><div class="vthumb"></div><button class="sbtn mt-auto" aria-label="向下滚动"><svg width="7" height="4"><path d="M0 0h7L3.500 4z" fill="#222"/></svg></button></div>
</main>
<footer class="sheetbar">
<div class="nav-btns"><svg width="5" height="8"><path d="M5 0v8L0 4z" fill="#bbb"/></svg><svg width="5" height="8"><path d="M0 0v8l5-4z" fill="#bbb"/></svg></div>
<button class="stab">Sheet1</button><button class="stab">Sheet2</button><button class="stab">Sheet4</button><button class="stab act">成绩表</button><button class="stab">Sheet3</button><button class="stab">Sheet5</button><button class="stab">Sheet6</button><button class="stab">Sheet7</button><button class="stab">Sheet8</button><button class="stab last">Sheet9</button>
<button class="ms-4 ps-2 align-self-center" aria-label="新工作表"><svg width="17" height="17" fill="none" stroke="#777"><circle cx="8.500" cy="8.500" r="7.500"/><path d="M8.500 5v7M5 8.500h7" stroke-width="2"/></svg></button>
<svg class="ms-auto mt-2" width="2" height="11" fill="#aaa"><path d="M0 0h2v2H0zM0 4h2v2H0zM0 8h2v2H0z"/></svg>
<div class="hscroll"><button class="sbtn" aria-label="向左滚动"><svg width="4" height="7"><path d="M4 0v7L0 3.500z" fill="#222"/></svg></button><div class="hthumb"></div><button class="sbtn" aria-label="向右滚动"><svg width="4" height="7"><path d="M0 0v7l4-3.500z" fill="#222"/></svg></button></div>
</footer>
<div class="statusbar"></div>
<div class="ime">CH ♪ 简</div>
<div class="wm"><svg width="43" height="42" viewBox="0 0 43 42"><defs><linearGradient id="wa" x1="1" y1="0" x2="0" y2="1"><stop stop-color="#55c8f5"/><stop offset="1" stop-color="#2a62b5"/></linearGradient><linearGradient id="wb" x1="1" y1="0" x2="0" y2="1"><stop stop-color="#2fae5d"/><stop offset="1" stop-color="#f2ea55"/></linearGradient></defs><path d="M43 1C20 0 1 12 0 26c0 8 6 11 12 8-6-1-8-5-5-12C11 12 25 4 43 1z" fill="url(#wa)"/><path d="M8 32c-4-12 10-20 17-13 4 5-1 12-8 11 6-2 8-7 3-9-6-2-12 4-12 11z" fill="url(#wa)"/><path d="M41 16c4 14-14 24-38 25 14-3 25-8 28-14 2-4 1-6-1-8 4-3 8-4 11-3z" fill="url(#wb)"/></svg><div><strong>极光下载站</strong><span>www.xz7.com</span></div></div>
</div>
<script>
const scores = [
["小红",91,80,90,88,70,505,8],["小明",79,87,84,90,95,515,3],["小黄",89,82,88,80,80,497,12],["李四",86,81,89,79,89,498,10],["王五",90,85,86,77,88,516,2],
["赵六",94,80,84,77,87,499,9],["小A",84,86,88,76,87,510,5],["小B",74,89,74,74,77,482,12],["小C",74,74,77,84,76,474,13],["小D",74,86,75,75,77,461,13],
["小E",94,77,94,89,86,524,1],["小F",86,80,74,79,80,487,9],["小G",94,70,88,77,94,512,2],["小H",77,73,88,94,84,500,5],["小I",89,77,86,88,78,498,5],
["小J",74,94,80,88,93,511,2],["小K",84,75,74,79,74,475,6],["小L",74,89,88,75,86,506,2],["小M",94,77,74,74,77,485,4],["小N",89,74,77,84,99,502,2]];
const side = {2:["姓名","英语成绩"],3:["小E",94],4:["小J",80],5:["小M",74]};
const marks = {"13B":"bm1","13E":"bm2","18B":"bm3","18E":"bm4","21B":"bm5","21E":"bm6"};
const cols = "BCDEGHIJ";
let html = "";
for (let r = 1; r <= 23; r++) {
  html += `<tr class="${r === 6 ? "freeze" : r === 8 ? "cur" : ""}"><th>${r}</th>`;
  if (r === 1) html += '<td class="ink heading" colspan="4">xxx班级学生成绩表</td><td class="ink" colspan="4"></td>';
  else {
    const data = r === 2 ? ["姓名","语文","数学","英语","化学","生物","总分","名次"] : scores[r - 3] || Array(8).fill("");
    data.forEach((v, i) => {
      const c = ["ink"];
      if (i === 3) c.push("split");
      if (r >= 9 && i === 0) { c.push("pupil"); v = v.replace(/[A-Z]/, "<i>$&</i>"); }
      if (r >= 8 && i > 0 && i < 7) c.push("song");
      if (r > 2 && i === 7) c.push("off-s");
      const m = marks[r + cols[i]];
      const extra = m ? `<span class="box-mark ${m}"></span>` : r === 2 && i === 1 ? '<button class="filter" aria-label="筛选"><svg width="8" height="5" viewBox="0 0 7 4"><use href="#tri"/></svg></button>' : "";
      html += `<td class="${c.join(" ")}">${v}${extra}</td>`;
    });
  }
  const s = side[r] || ["", ""];
  const over = r === 8 ? '<span class="picked"></span>' : r === 9 ? '<svg class="pointer" width="15" height="15" viewBox="0 0 15 15"><path d="M5 1h5v4h4v5h-4v4H5v-4H1V5h4z" fill="#fff" stroke="#000" stroke-width="1.500"/></svg>' : "";
  html += `<td></td><td>${s[0]}</td><td class="${r > 2 ? "off-s" : ""}">${s[1]}${over}</td><td class="edge"></td></tr>`;
}
document.getElementById("rows").innerHTML = html;
</script>
</body>
</html>
